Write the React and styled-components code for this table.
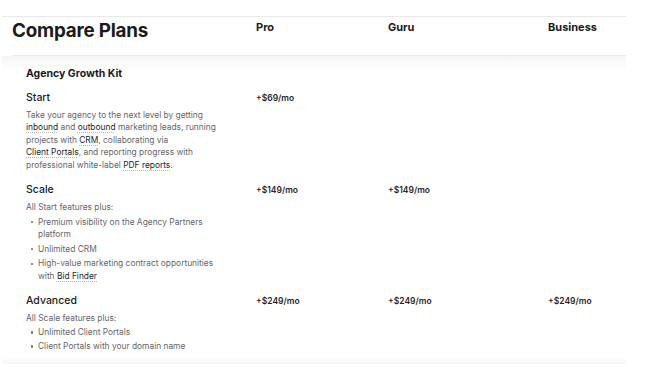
import React from "react";
import styled, { createGlobalStyle } from "styled-components";

const Global = createGlobalStyle`
  html, body { margin: 0; padding: 0; background: #fff; }
  body { font-family: Inter, "Noto Sans", "Liberation Sans", sans-serif; color: #1d1d1f; }
`;

const Page = styled.div`
  padding-top: 16px;
  padding-left: 2px;
  width: 624px;
`;

const Table = styled.div`
  border-top: 1px solid #e9e9eb;
`;

const HeaderRow = styled.div`
  display: grid;
  grid-template-columns: 244px 132px 160px 1fr;
  margin-left: 10px;
  height: 38px;
  border-bottom: 1px solid #ececee;
`;

const Title = styled.h1`
  margin: 0;
  font-size: 18.8px;
  line-height: 28px;
  font-weight: 700;
  letter-spacing: -0.2px;
  color: #1b1b1d;
`;

const PlanName = styled.div`
  padding-top: 3px;
  font-size: 11px;
  line-height: 14px;
  font-weight: 700;
  color: #1b1b1d;
`;

const Body = styled.div`
  padding: 11px 0 12px 0;
  background: linear-gradient(#f5f5f6 0px, #ffffff 14px, #ffffff calc(100% - 8px), #f7f7f8 100%);
`;

const SectionTitle = styled.div`
  padding-left: 24px;
  font-size: 10.5px;
  line-height: 14px;
  font-weight: 700;
  color: #1b1b1d;
`;

const Row = styled.div`
  display: grid;
  grid-template-columns: 230px 132px 160px 1fr;
  padding-left: 24px;
  margin-top: ${(p) => p.$gap}px;
`;

const FeatureCell = styled.div`
  width: 196px;
`;

const FeatureName = styled.div`
  font-size: 10.5px;
  line-height: 14px;
  font-weight: 500;
  color: #1b1b1d;
`;

const Desc = styled.div`
  margin-top: 4px;
  font-size: 8.4px;
  line-height: 12.4px;
  color: #66666a;
`;

const Term = styled.span`
  color: #26262a;
  text-decoration: underline dotted #b9b9be;
  text-underline-offset: 2px;
  text-decoration-thickness: 1px;
`;

const List = styled.ul`
  margin: 0;
  padding: 0;
  list-style: none;
`;

const Item = styled.li`
  position: relative;
  margin-top: ${(p) => p.$gap}px;
  padding-left: 12px;
  &::before {
    content: "";
    position: absolute;
    left: 4.5px;
    top: 5.4px;
    width: 2.2px;
    height: 2.2px;
    border-radius: 50%;
    background: #6f6f73;
  }
`;

const Price = styled.div`
  font-size: 8.5px;
  line-height: 14px;
  font-weight: 600;
  color: #26262a;
`;

const tiers = [
  {
    name: "Start",
    gap: 10,
    prices: ["+$69/mo", "", ""],
    desc: (
      <>
        Take your agency to the next level by getting
        <br />
        <Term>inbound</Term> and <Term>outbound</Term> marketing leads, running
        <br />
        projects with <Term>CRM</Term>, collaborating via
        <br />
        <Term>Client Portals</Term>, and reporting progress with
        <br />
        professional white-label <Term>PDF reports</Term>.
      </>
    ),
  },
  {
    name: "Scale",
    gap: 12,
    itemGap: 2.2,
    prices: ["+$149/mo", "+$149/mo", ""],
    intro: "All Start features plus:",
    items: [
      <>
        Premium visibility on the Agency Partners
        <br />
        platform
      </>,
      <>Unlimited CRM</>,
      <>
        High-value marketing contract opportunities
        <br />
        with <Term>Bid Finder</Term>
      </>,
    ],
  },
  {
    name: "Advanced",
    gap: 12,
    itemGap: 1.6,
    prices: ["+$249/mo", "+$249/mo", "+$249/mo"],
    intro: "All Scale features plus:",
    items: [<>Unlimited Client Portals</>, <>Client Portals with your domain name</>],
  },
];

export default function App() {
  return (
    <>
      <Global />
      <Page>
        <Table>
          <HeaderRow>
            <Title>Compare Plans</Title>
            <PlanName>Pro</PlanName>
            <PlanName>Guru</PlanName>
            <PlanName>Business</PlanName>
          </HeaderRow>
          <Body>
            <SectionTitle>Agency Growth Kit</SectionTitle>
            {tiers.map((t) => (
              <Row key={t.name} $gap={t.gap}>
                <FeatureCell>
                  <FeatureName>{t.name}</FeatureName>
                  <Desc>
                    {t.desc}
                    {t.intro && (
                      <>
                        {t.intro}
                        <List>
                          {t.items.map((it, i) => (
                            <Item key={i} $gap={t.itemGap}>
                              {it}
                            </Item>
                          ))}
                        </List>
                      </>
                    )}
                  </Desc>
                </FeatureCell>
                {t.prices.map((p, i) => (
                  <Price key={i}>{p}</Price>
                ))}
              </Row>
            ))}
          </Body>
        </Table>
      </Page>
    </>
  );
}
